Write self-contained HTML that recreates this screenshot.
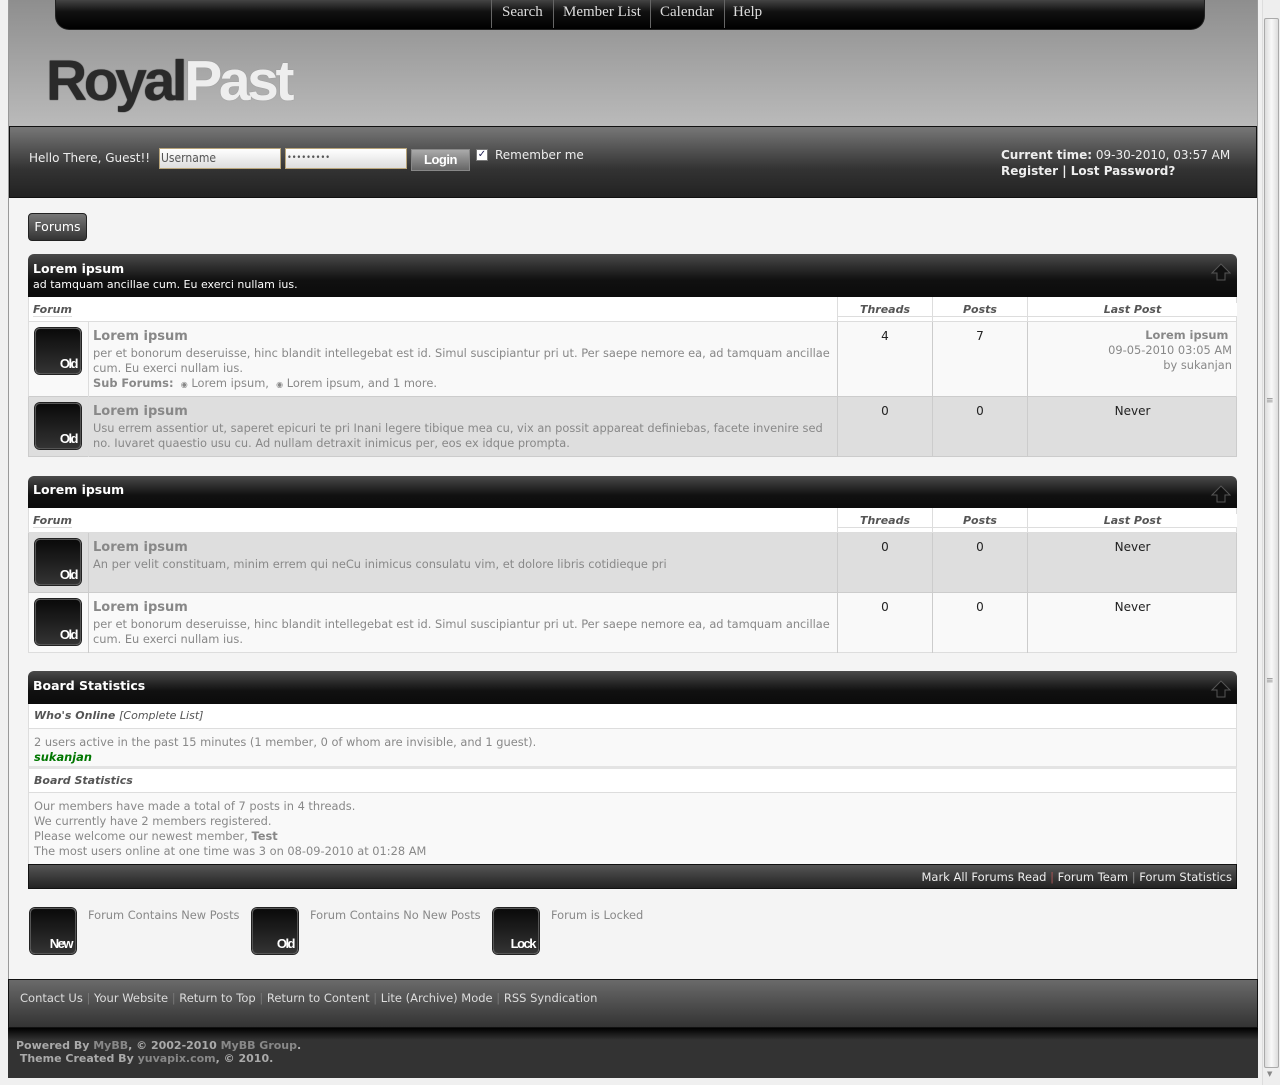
<!DOCTYPE html>
<html><head><meta charset="utf-8"><style>
*{margin:0;padding:0;box-sizing:border-box}
body{width:1280px;height:1085px;background:#f0f0f0;font-family:"DejaVu Sans","Liberation Sans",sans-serif;font-size:11.4px;color:#888;position:relative;overflow:hidden}
.a{position:absolute}
.wrap{left:8px;top:0;width:1250px;height:1078px;background:#f4f4f4;border-left:1px solid #999;border-right:1px solid #999}
.hdr{left:9px;top:0;width:1248px;height:126px;background:linear-gradient(#8e8e8e,#bababa)}
.nav{left:55px;top:0;width:1150px;height:30px;background:linear-gradient(#444,#111 40%,#000);border-radius:0 0 14px 14px;border:1px solid #222;border-top:none}
.nav span{position:absolute;top:4px;font-family:"Liberation Serif",serif;font-size:15px;color:#ddd}
.sep{position:absolute;top:0;width:1px;height:28px;background:#666}
.logo{left:46px;top:48px;font-family:"Liberation Sans",sans-serif;font-size:57px;font-weight:bold;letter-spacing:-3.4px;line-height:66px}
.bar{left:9px;top:126px;width:1248px;height:72px;background:linear-gradient(#777,#333 60%,#222);border:1px solid #111}
.w{color:#eee;font-size:12px}
.inp{top:148px;height:21px;background:linear-gradient(#fff,#ddd);border:1px solid #b9a57a;font-size:12px;color:#555;padding:2px 1px;font-family:"DejaVu Sans Condensed","DejaVu Sans",sans-serif}
.thd{background:linear-gradient(#4a4a4a,#111 60%,#0b0b0b);border-radius:6px 6px 0 0;color:#fff;font-weight:bold;font-size:12.5px}
.th{background:#fff;border-bottom:1px solid #ddd;color:#555;font-weight:bold;font-style:italic;font-size:11px}
.ico{width:46px;height:46px;border-radius:5px;background:linear-gradient(#0a0a0a,#333);border:1px solid #555;box-shadow:0 0 0 1px #222}
.ico b{position:absolute;right:3px;bottom:2px;color:#fff;font-family:"Liberation Sans",sans-serif;font-size:13px;letter-spacing:-1.5px;font-weight:bold}
.tt{color:#888;font-weight:bold;font-size:13px}
.num{color:#222;font-size:12px;text-align:center}
</style></head><body>
<div class="a wrap"></div>
<div class="a hdr"></div>
<div class="a nav">
<div class="sep" style="left:435px"></div><span style="left:446px">Search</span>
<div class="sep" style="left:497px"></div><span style="left:507px">Member List</span>
<div class="sep" style="left:594px"></div><span style="left:604px">Calendar</span>
<div class="sep" style="left:668px"></div><span style="left:677px">Help</span>
</div>
<div class="a logo"><span style="color:#2a2a2a;text-shadow:0 0 1px #000">Royal</span><span style="color:#eee;text-shadow:0 0 1px #888">Past</span></div>
<div class="a bar"></div>
<div class="a w" style="left:29px;top:151px">Hello There, Guest!!</div>
<div class="a inp" style="left:159px;width:122px">Username</div>
<div class="a inp" style="left:285px;width:122px;font-size:9px;padding-top:4px">•••••••••</div>
<div class="a" style="left:411px;top:149px;width:59px;height:22px;background:linear-gradient(#aaa,#666);border:1px solid #888;color:#fff;font-weight:bold;font-size:13px;text-align:center;line-height:20px;font-family:'Liberation Sans',sans-serif;letter-spacing:-.5px">Login</div>
<div class="a" style="left:476px;top:149px;width:12px;height:12px;background:#fff;border:1px solid #777;color:#225;font-size:10px;line-height:10px;text-align:center">✓</div>
<div class="a w" style="left:495px;top:148px">Remember me</div>
<div class="a w" style="left:1001px;top:148px"><b>Current time:</b> 09-30-2010, 03:57 AM</div>
<div class="a w" style="left:1001px;top:164px;font-weight:bold">Register | Lost Password?</div>

<div class="a" style="left:28px;top:213px;width:59px;height:28px;background:linear-gradient(#777,#333);border:1px solid #222;border-radius:4px;color:#fff;font-size:12.5px;text-align:center;line-height:26px">Forums</div>

<!-- Cat 1 -->
<div class="a thd" style="left:28px;top:254px;width:1209px;height:43px"><div class="a" style="left:5px;top:7px">Lorem ipsum</div><div class="a" style="left:5px;top:24px;font-weight:normal;font-size:11px">ad tamquam ancillae cum. Eu exerci nullam ius.</div>
<svg class="a" style="right:6px;top:9px" width="20" height="18"><path d="M10 1L19 10H14V17H6V10H1Z" fill="#111" stroke="#555"/></svg></div>
<div class="a th" style="left:28px;top:297px;width:1209px;height:25px;border-left:1px solid #ddd;border-right:1px solid #ddd"></div>
<div class="a th" style="left:33px;top:303px">Forum</div>
<div class="a" style="left:837px;top:297px;width:1px;height:160px;background:#ddd"></div>
<div class="a" style="left:932px;top:297px;width:1px;height:160px;background:#ddd"></div>
<div class="a" style="left:1027px;top:297px;width:1px;height:160px;background:#ddd"></div>
<div class="a th" style="left:838px;top:303px;width:94px;text-align:center">Threads</div>
<div class="a th" style="left:933px;top:303px;width:94px;text-align:center">Posts</div>
<div class="a th" style="left:1028px;top:303px;width:209px;text-align:center">Last Post</div>
<div class="a" style="left:28px;top:322px;width:1209px;height:75px;background:#f9f9f9;border:1px solid #ddd;border-top:none;border-bottom:1px solid #ccc"></div>
<div class="a" style="left:28px;top:397px;width:1209px;height:60px;background:#dedede;border:1px solid #ccc;border-top:none"></div>
<div class="a" style="left:88px;top:322px;width:1px;height:135px;background:#ddd"></div>
<div class="a" style="left:837px;top:322px;width:1px;height:135px;background:#ccc"></div>
<div class="a" style="left:932px;top:322px;width:1px;height:135px;background:#ccc"></div>
<div class="a" style="left:1027px;top:322px;width:1px;height:135px;background:#ccc"></div>
<div class="a ico" style="left:35px;top:328px"><b>Old</b></div>
<div class="a tt" style="left:93px;top:329px">Lorem ipsum</div>
<div class="a" style="left:93px;top:346px;width:742px;line-height:15px">per et bonorum deseruisse, hinc blandit intellegebat est id. Simul suscipiantur pri ut. Per saepe nemore ea, ad tamquam ancillae cum. Eu exerci nullam ius.<br><b>Sub Forums:</b> &nbsp;<span style="font-size:8px">◉</span> Lorem ipsum, &nbsp;<span style="font-size:8px">◉</span> Lorem ipsum, and 1 more.</div>
<div class="a num" style="left:838px;top:329px;width:94px">4</div>
<div class="a num" style="left:933px;top:329px;width:94px">7</div>
<div class="a" style="left:1030px;top:328px;width:202px;text-align:right;line-height:15px"><b>Lorem ipsum</b>&nbsp;<br>09-05-2010 03:05 AM<br>by sukanjan</div>
<div class="a ico" style="left:35px;top:403px"><b>Old</b></div>
<div class="a tt" style="left:93px;top:404px">Lorem ipsum</div>
<div class="a" style="left:93px;top:421px;width:742px;line-height:15px">Usu errem assentior ut, saperet epicuri te pri Inani legere tibique mea cu, vix an possit appareat definiebas, facete invenire sed no. Iuvaret quaestio usu cu. Ad nullam detraxit inimicus per, eos ex idque prompta.</div>
<div class="a num" style="left:838px;top:404px;width:94px">0</div>
<div class="a num" style="left:933px;top:404px;width:94px">0</div>
<div class="a num" style="left:1028px;top:404px;width:209px">Never</div>

<!-- Cat 2 -->
<div class="a thd" style="left:28px;top:476px;width:1209px;height:32px"><div class="a" style="left:5px;top:6px">Lorem ipsum</div>
<svg class="a" style="right:6px;top:9px" width="20" height="18"><path d="M10 1L19 10H14V17H6V10H1Z" fill="#111" stroke="#555"/></svg></div>
<div class="a th" style="left:28px;top:508px;width:1209px;height:25px;border-left:1px solid #ddd;border-right:1px solid #ddd"></div>
<div class="a th" style="left:33px;top:514px">Forum</div>
<div class="a" style="left:837px;top:508px;width:1px;height:145px;background:#ddd"></div>
<div class="a" style="left:932px;top:508px;width:1px;height:145px;background:#ddd"></div>
<div class="a" style="left:1027px;top:508px;width:1px;height:145px;background:#ddd"></div>
<div class="a th" style="left:838px;top:514px;width:94px;text-align:center">Threads</div>
<div class="a th" style="left:933px;top:514px;width:94px;text-align:center">Posts</div>
<div class="a th" style="left:1028px;top:514px;width:209px;text-align:center">Last Post</div>
<div class="a" style="left:28px;top:533px;width:1209px;height:60px;background:#dedede;border:1px solid #ccc;border-top:none"></div>
<div class="a" style="left:28px;top:593px;width:1209px;height:60px;background:#f9f9f9;border:1px solid #ddd;border-top:none"></div>
<div class="a" style="left:88px;top:533px;width:1px;height:120px;background:#ccc"></div>
<div class="a" style="left:837px;top:533px;width:1px;height:120px;background:#ccc"></div>
<div class="a" style="left:932px;top:533px;width:1px;height:120px;background:#ccc"></div>
<div class="a" style="left:1027px;top:533px;width:1px;height:120px;background:#ccc"></div>
<div class="a ico" style="left:35px;top:539px"><b>Old</b></div>
<div class="a tt" style="left:93px;top:540px">Lorem ipsum</div>
<div class="a" style="left:93px;top:557px">An per velit constituam, minim errem qui neCu inimicus consulatu vim, et dolore libris cotidieque pri</div>
<div class="a num" style="left:838px;top:540px;width:94px">0</div>
<div class="a num" style="left:933px;top:540px;width:94px">0</div>
<div class="a num" style="left:1028px;top:540px;width:209px">Never</div>
<div class="a ico" style="left:35px;top:599px"><b>Old</b></div>
<div class="a tt" style="left:93px;top:600px">Lorem ipsum</div>
<div class="a" style="left:93px;top:617px;width:742px;line-height:15px">per et bonorum deseruisse, hinc blandit intellegebat est id. Simul suscipiantur pri ut. Per saepe nemore ea, ad tamquam ancillae cum. Eu exerci nullam ius.</div>
<div class="a num" style="left:838px;top:600px;width:94px">0</div>
<div class="a num" style="left:933px;top:600px;width:94px">0</div>
<div class="a num" style="left:1028px;top:600px;width:209px">Never</div>

<!-- Stats -->
<div class="a thd" style="left:28px;top:671px;width:1209px;height:33px"><div class="a" style="left:5px;top:7px">Board Statistics</div>
<svg class="a" style="right:6px;top:9px" width="20" height="18"><path d="M10 1L19 10H14V17H6V10H1Z" fill="#111" stroke="#555"/></svg></div>
<div class="a th" style="left:28px;top:704px;width:1209px;height:25px;border:1px solid #ddd;border-top:none;padding:5px 0 0 5px">Who's Online <span style="font-weight:normal">[Complete List]</span></div>
<div class="a" style="left:28px;top:729px;width:1209px;height:40px;background:#f9f9f9;border:1px solid #ddd;border-top:none;border-bottom:3px solid #e4e4e4;padding:6px 0 0 5px;line-height:15px">2 users active in the past 15 minutes (1 member, 0 of whom are invisible, and 1 guest).<br><b style="color:#070;font-style:italic">sukanjan</b></div>
<div class="a th" style="left:28px;top:769px;width:1209px;height:24px;border:1px solid #ddd;border-top:none;padding:5px 0 0 5px">Board Statistics</div>
<div class="a" style="left:28px;top:793px;width:1209px;height:71px;background:#f9f9f9;border-left:1px solid #ddd;border-right:1px solid #ddd;padding:6px 0 0 5px;line-height:15px">Our members have made a total of 7 posts in 4 threads.<br>We currently have 2 members registered.<br>Please welcome our newest member, <b>Test</b><br>The most users online at one time was 3 on 08-09-2010 at 01:28 AM</div>
<div class="a" style="left:28px;top:864px;width:1209px;height:25px;background:linear-gradient(#555,#222);border:1px solid #111;color:#eee;text-align:right;padding:5px 4px 0 0;font-size:11.5px">Mark All Forums Read <span style="color:#a55">|</span> Forum Team <span style="color:#888">|</span> Forum Statistics</div>

<div class="a ico" style="left:30px;top:908px"><b>New</b></div>
<div class="a" style="left:88px;top:908px">Forum Contains New Posts</div>
<div class="a ico" style="left:252px;top:908px"><b>Old</b></div>
<div class="a" style="left:310px;top:908px">Forum Contains No New Posts</div>
<div class="a ico" style="left:493px;top:908px"><b>Lock</b></div>
<div class="a" style="left:551px;top:908px">Forum is Locked</div>

<div class="a" style="left:8px;top:979px;width:1250px;height:49px;background:linear-gradient(#6a6a6a,#333);border:1px solid #111;color:#ddd;font-size:11.5px;padding:11px 0 0 11px">Contact Us <span style="color:#777">|</span> Your Website <span style="color:#777">|</span> Return to Top <span style="color:#777">|</span> Return to Content <span style="color:#777">|</span> Lite (Archive) Mode <span style="color:#777">|</span> RSS Syndication</div>
<div class="a" style="left:8px;top:1028px;width:1250px;height:50px;background:linear-gradient(#000,#333 12px,#333);color:#aaa;font-weight:bold;font-size:11px;padding:11px 0 0 8px;line-height:13px">Powered By <span style="color:#888">MyBB</span>, © 2002-2010 <span style="color:#888">MyBB Group</span>.<br>&nbsp;Theme Created By <span style="color:#888">yuvapix.com</span>, © 2010.</div>

<!-- scrollbar -->
<div class="a" style="left:1262px;top:0;width:18px;height:1085px;background:#eee;border-left:1px solid #ddd"></div>
<div class="a" style="left:1264px;top:18px;width:15px;height:1050px;background:linear-gradient(90deg,#ddd,#f8f8f8,#ddd);border:1px solid #aaa;border-radius:2px"></div>
<div class="a" style="left:1266px;top:396px;color:#888;font-size:9px">≡</div>
<div class="a" style="left:1266px;top:676px;color:#888;font-size:9px">≡</div>
<div class="a" style="left:1267px;top:1070px;color:#888;font-size:7px">▼</div>
</body></html>
